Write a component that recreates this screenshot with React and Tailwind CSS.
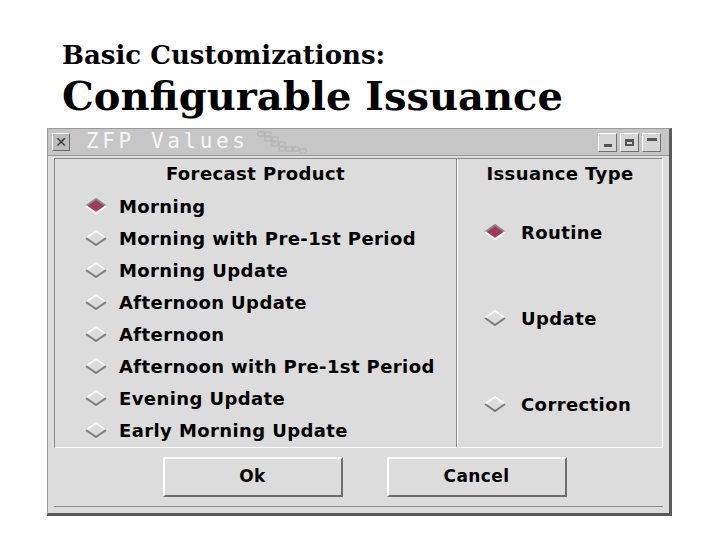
import React from 'react';

const products = [
  'Morning',
  'Morning with Pre-1st Period',
  'Morning Update',
  'Afternoon Update',
  'Afternoon',
  'Afternoon with Pre-1st Period',
  'Evening Update',
  'Early Morning Update',
];

const types = ['Routine', 'Update', 'Correction'];

const Diamond = ({ on }) => (
  <svg width="22" height="16" viewBox="0 0 22 16" className="shrink-0">
    <polygon points="11,1 21,8 11,15 1,8" fill={on ? '#a3395c' : '#dcdcdc'} />
    <polyline points="1,8 11,1 21,8" fill="none" stroke={on ? '#8a8a8a' : '#ffffff'} strokeWidth="2" />
    <polyline points="1,8 11,15 21,8" fill="none" stroke={on ? '#ffffff' : '#7a7a7a'} strokeWidth="2" />
  </svg>
);

const Radio = ({ label, on, gap = 'gap-[12px]' }) => (
  <div className={`flex items-center h-[32px] ${gap}`}>
    <Diamond on={on} />
    <span>{label}</span>
  </div>
);

const TitleButton = ({ children }) => (
  <div className="w-[19px] h-[19px] bg-[#d6d6d6] border border-t-white border-l-white border-r-[#707070] border-b-[#707070] flex items-center justify-center">
    {children}
  </div>
);

const Button = ({ label }) => (
  <button
    className="w-[180px] h-[40px] bg-[#dcdcdc] border-2 border-t-white border-l-white border-r-[#6e6e6e] border-b-[#6e6e6e] text-[17px] font-bold text-black tracking-[0.4px]"
    style={{ fontFamily: '"DejaVu Sans", sans-serif' }}
  >
    {label}
  </button>
);

export default function App() {
  return (
    <div className="w-[720px] h-[540px] bg-white overflow-hidden" style={{ fontFamily: '"DejaVu Sans", sans-serif' }}>
      <div className="h-[128px] pl-[62px] pt-[38px] font-bold text-black" style={{ fontFamily: '"DejaVu Serif", serif' }}>
        <div className="text-[26px] leading-[34px]">Basic Customizations:</div>
        <div className="text-[40px] leading-[48px]">Configurable Issuance</div>
      </div>

      {/* window */}
      <div className="ml-[47px] w-[625px] h-[388px] bg-[#dcdcdc] border border-[#9a9a9a] border-r-[3px] border-b-[3px] border-r-[#5a5a5a] border-b-[#5a5a5a] flex flex-col">
        <div className="h-[27px] bg-[#c6c6c6] flex items-center px-[4px] border-b border-[#9a9a9a]">
          <div className="w-[18px] h-[18px] bg-[#bcbcbc] border border-t-white border-l-white border-r-[#6a6a6a] border-b-[#6a6a6a] flex items-center justify-center text-[14px] leading-none font-bold text-[#333]">
            ✕
          </div>
          <span
            className="ml-[16px] text-[21px] text-[#f7f7f7] tracking-[3.6px]"
            style={{ fontFamily: '"DejaVu Sans Mono", monospace' }}
          >
            ZFP Values
          </span>
          <svg width="80" height="24" viewBox="0 0 80 24" className="ml-[6px]">
            <g fill="none" stroke="#b0b0b0">
              <rect x="4" y="2" width="6" height="4" />
              <rect x="11" y="2" width="6" height="4" />
              <rect x="11" y="7" width="6" height="4" />
              <rect x="18" y="7" width="6" height="4" />
              <rect x="18" y="12" width="6" height="4" />
              <rect x="25" y="12" width="6" height="4" />
              <rect x="25" y="17" width="6" height="4" />
              <rect x="32" y="17" width="6" height="4" />
              <rect x="39" y="17" width="6" height="4" />
              <rect x="46" y="19" width="6" height="4" />
            </g>
          </svg>
          <div className="ml-auto flex gap-[3px] mr-[4px]">
            <TitleButton>
              <div className="w-[8px] h-[3px] bg-[#555] mt-[6px]" />
            </TitleButton>
            <TitleButton>
              <div className="w-[9px] h-[7px] border-2 border-[#555] border-t-[3px]" />
            </TitleButton>
            <TitleButton>
              <div className="w-[10px] h-[3px] bg-[#555] -mt-[6px]" />
            </TitleButton>
          </div>
        </div>

        <div className="flex-1 flex flex-col px-[6px] pt-[2px] pb-[6px]">
          <div className="flex h-[290px] border border-t-[#8a8a8a] border-l-[#8a8a8a] border-r-white border-b-white text-[18px] font-bold text-black tracking-[0.4px]">
            <div className="w-[402px] border-r border-r-[#8a8a8a] pl-[30px] pt-[1px]">
              <div className="text-center pr-[30px] h-[28px] leading-[28px]">Forecast Product</div>
              <div className="mt-[2px]">
                {products.map((p, i) => (
                  <Radio key={p} label={p} on={i === 0} />
                ))}
              </div>
            </div>
            <div className="flex-1 border-l border-l-white pl-[26px] pt-[1px]">
              <div className="text-center pr-[26px] h-[28px] leading-[28px]">Issuance Type</div>
              <div className="flex flex-col gap-[54px] mt-[28px]">
                {types.map((t, i) => (
                  <Radio key={t} label={t} on={i === 0} gap="gap-[15px]" />
                ))}
              </div>
            </div>
          </div>
          <div className="flex-1 flex items-center justify-center gap-[44px] border-b border-[#8a8a8a] pl-[12px]">
            <Button label="Ok" />
            <Button label="Cancel" />
          </div>
        </div>
      </div>
    </div>
  );
}
